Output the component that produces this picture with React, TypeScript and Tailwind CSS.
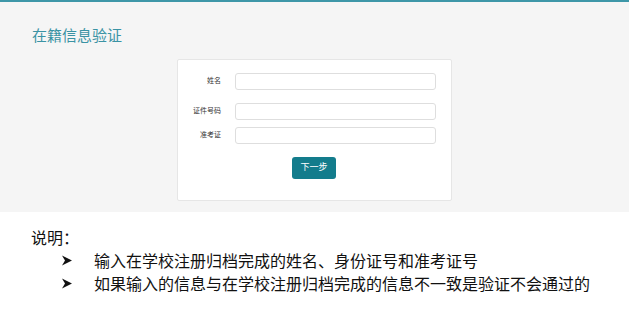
export default function App() {
    return (
        <div className="min-h-[313px] bg-white" style={{ fontFamily: '"Liberation Sans", "Noto Sans CJK SC", sans-serif' }}>
            <section className="border-t-2 border-[#3e97a8] bg-[#f5f5f5] pb-[11px]">
                <h1 className="pl-[32px] pt-[24px] text-[15px] leading-[20px] text-[#3a93a4]">在籍信息验证</h1>
                <div className="mx-auto mt-[13px] w-[275px] rounded-[2px] border border-[#e6e6e6] bg-white pt-[13px] pb-[21px] pr-[15px]">
                    <div className="flex items-center">
                        <label className="w-[43px] shrink-0 text-right text-[7px] text-[#333]">姓名</label>
                        <input className="ml-[14px] h-[17px] min-w-0 flex-1 rounded-[3px] border border-[#dedede] bg-white" />
                    </div>
                    <div className="mt-[13px] flex items-center">
                        <label className="w-[43px] shrink-0 text-right text-[7px] text-[#333]">证件号码</label>
                        <input className="ml-[14px] h-[17px] min-w-0 flex-1 rounded-[3px] border border-[#dedede] bg-white" />
                    </div>
                    <div className="mt-[7px] flex items-center">
                        <label className="w-[43px] shrink-0 text-right text-[7px] text-[#333]">准考证</label>
                        <input className="ml-[14px] h-[17px] min-w-0 flex-1 rounded-[3px] border border-[#dedede] bg-white" />
                    </div>
                    <div className="mt-[13px] flex justify-center pl-[14px]">
                        <button className="h-[22px] w-[44px] rounded-[3px] bg-[#137c8c] text-[9px] text-white">下一步</button>
                    </div>
                </div>
            </section>
            <div className="pl-[31px] pt-[14px] text-[16px] leading-[23px] text-[#111]" style={{ fontFamily: '"Noto Sans CJK SC", sans-serif' }}>
                <p>说明：</p>
                <ul className="pl-[31px]">
                    <li className="flex items-center">
                        <span className="flex w-[32px] items-center">
                            <svg width="10" height="11" viewBox="0 0 10 11">
                                <path d="M0 0.5 L10 5.5 L0 10.5 L3 5.5 Z" fill="#111" />
                            </svg>
                        </span>
                        <span>输入在学校注册归档完成的姓名、身份证号和准考证号</span>
                    </li>
                    <li className="flex items-center">
                        <span className="flex w-[32px] items-center">
                            <svg width="10" height="11" viewBox="0 0 10 11">
                                <path d="M0 0.5 L10 5.5 L0 10.5 L3 5.5 Z" fill="#111" />
                            </svg>
                        </span>
                        <span>如果输入的信息与在学校注册归档完成的信息不一致是验证不会通过的</span>
                    </li>
                </ul>
            </div>
        </div>
    );
}
